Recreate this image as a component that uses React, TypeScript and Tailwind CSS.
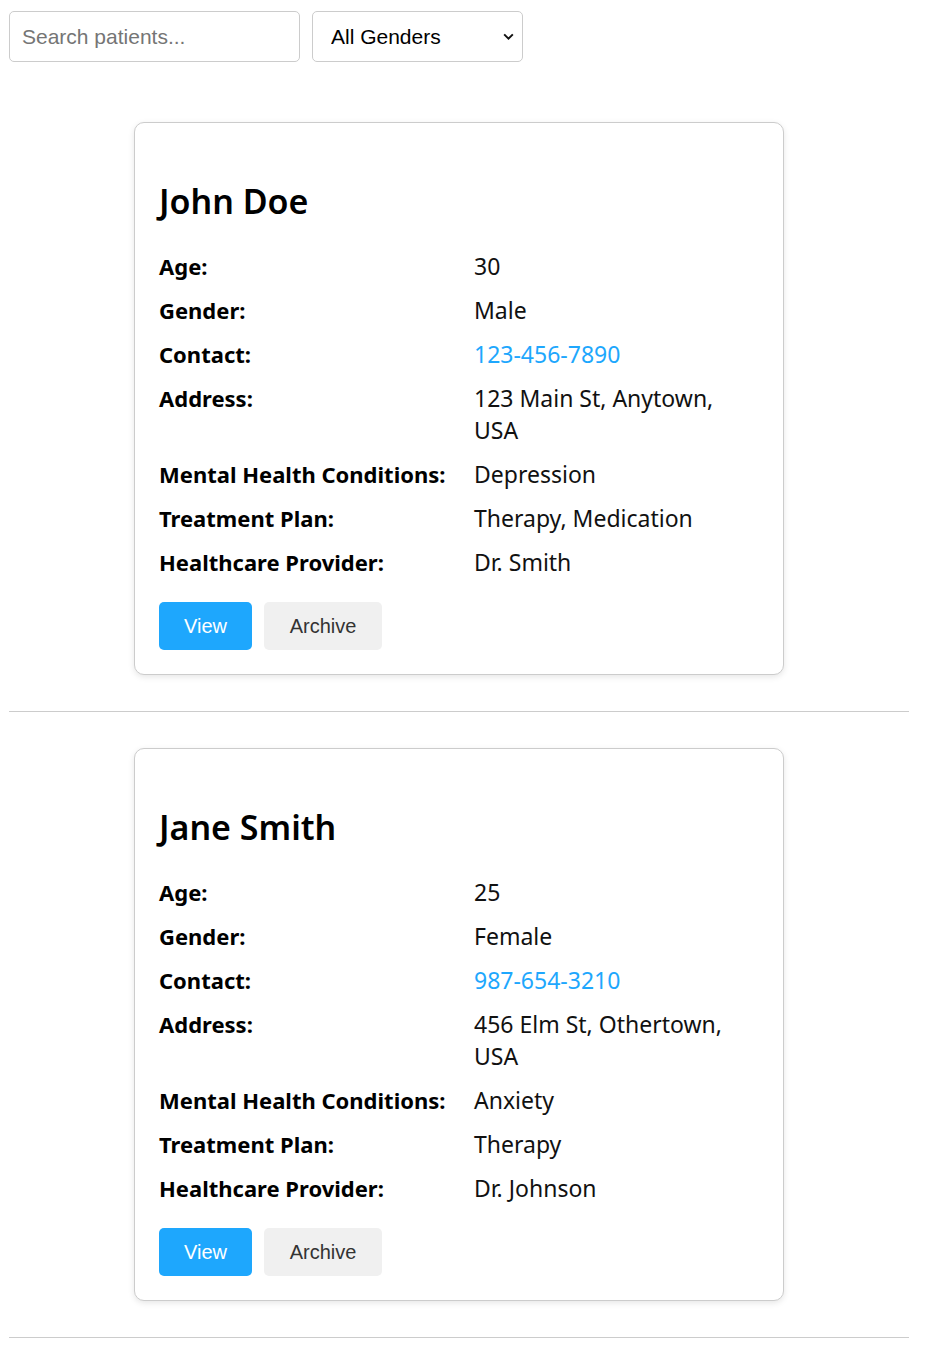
import { useState } from "react";

type Patient = {
  id: number;
  name: string;
  age: number;
  gender: string;
  contact: string;
  address: string;
  conditions: string;
  treatment: string;
  provider: string;
};

const PATIENTS: Patient[] = [
  {
    id: 1,
    name: "John Doe",
    age: 30,
    gender: "Male",
    contact: "123-456-7890",
    address: "123 Main St, Anytown, USA",
    conditions: "Depression",
    treatment: "Therapy, Medication",
    provider: "Dr. Smith",
  },
  {
    id: 2,
    name: "Jane Smith",
    age: 25,
    gender: "Female",
    contact: "987-654-3210",
    address: "456 Elm St, Othertown, USA",
    conditions: "Anxiety",
    treatment: "Therapy",
    provider: "Dr. Johnson",
  },
];

function Row({ label, children }: { label: string; children: React.ReactNode }) {
  return (
    <>
      <div className="py-[6px] text-[22px] font-bold text-black">{label}</div>
      <div className="py-[6px] text-[23px] text-[#111]">{children}</div>
    </>
  );
}

function PatientCard({ p }: { p: Patient }) {
  return (
    <div className="mx-auto w-[650px] rounded-[10px] border border-[#cccccc] bg-white px-6 pt-[59px] pb-6 shadow-[0_2px_6px_rgba(0,0,0,0.1)]">
      <h2 className="font-['Noto_Sans',sans-serif] text-[34px] font-semibold leading-[38px] text-black">
        {p.name}
      </h2>
      <div className="mt-6 grid grid-cols-[315px_1fr] leading-[32px]">
        <Row label="Age:">{p.age}</Row>
        <Row label="Gender:">{p.gender}</Row>
        <Row label="Contact:">
          <a href={`tel:${p.contact}`} className="text-[#1ea7fd]">
            {p.contact}
          </a>
        </Row>
        <Row label="Address:">{p.address}</Row>
        <Row label="Mental Health Conditions:">{p.conditions}</Row>
        <Row label="Treatment Plan:">{p.treatment}</Row>
        <Row label="Healthcare Provider:">{p.provider}</Row>
      </div>
      <div className="mt-[18px] flex gap-3 font-['Liberation_Sans',Arial,sans-serif] text-[20px]">
        <button
          type="button"
          className="h-12 w-[93px] rounded-[5px] bg-[#1ea7fd] text-white"
        >
          View
        </button>
        <button
          type="button"
          className="h-12 w-[118px] rounded-[5px] bg-[#f0f0f0] text-[#333]"
        >
          Archive
        </button>
      </div>
    </div>
  );
}

export default function App() {
  const [query, setQuery] = useState("");
  const [gender, setGender] = useState("");

  const list = PATIENTS.filter(
    (p) =>
      p.name.toLowerCase().includes(query.toLowerCase()) &&
      (gender === "" || p.gender === gender)
  );

  return (
    <div className="min-h-screen bg-white font-['Noto_Sans',sans-serif]">
      <div className="w-[909px] pl-[9px] pt-[11px]">
        <div className="flex gap-3 font-['Liberation_Sans',Arial,sans-serif] text-[21px]">
          <input
            type="text"
            placeholder="Search patients..."
            value={query}
            onChange={(e) => setQuery(e.target.value)}
            className="h-[51px] w-[291px] rounded-[5px] border border-[#cccccc] px-3 outline-none placeholder:text-[#757575]"
          />
          <div className="relative">
            <select
              value={gender}
              onChange={(e) => setGender(e.target.value)}
              className="h-[51px] w-[211px] appearance-none rounded-[5px] border border-[#cccccc] bg-white pt-[1px] pl-[18px] text-black outline-none"
            >
              <option value="">All Genders</option>
              <option value="Male">Male</option>
              <option value="Female">Female</option>
            </select>
            <svg
              className="pointer-events-none absolute right-[8px] top-[19px]"
              width="13"
              height="13"
              viewBox="0 0 12 12"
              fill="none"
              stroke="#111"
              strokeWidth="1.8"
            >
              <path d="M2 4l4 4 4-4" />
            </svg>
          </div>
        </div>

        <div className="mt-[60px]">
          {list.map((p) => (
            <div key={p.id}>
              <PatientCard p={p} />
              <hr className="my-[36px] border-t border-[#cccccc]" />
            </div>
          ))}
        </div>
      </div>
    </div>
  );
}
